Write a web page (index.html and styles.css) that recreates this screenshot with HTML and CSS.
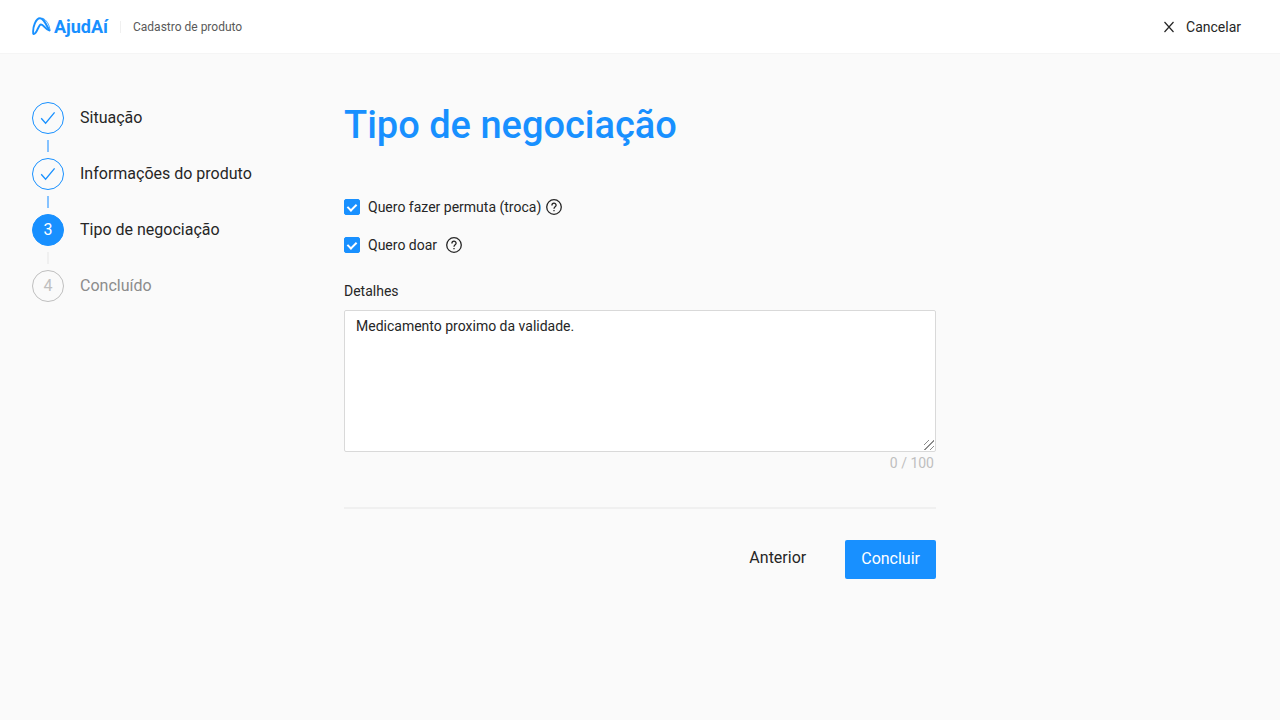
FILE: index.html
```html
<!DOCTYPE html>
<html lang="pt-BR">
<head>
<meta charset="utf-8">
<meta name="viewport" content="width=device-width, initial-scale=1">
<title>AjudAí - Cadastro de produto</title>
<link rel="stylesheet" href="styles.css">
</head>
<body>
<header class="header">
  <div class="brand">
    <svg class="brand-mark" viewBox="0 0 20 20" aria-hidden="true">
      <path d="M1.300 16.500C.4 10.500 3.800 1.200 8 1.200C11.500 1.200 13.500 6 16.800 12.500" stroke-width="1.900"/>
      <path d="M1.600 17C5 17.600 6.200 7.400 9 7.400C11.800 7.400 13.200 12.600 17.600 13.400" stroke-width="2"/>
      <path d="M11 1.400C14.200 2.800 17.200 7 18 12.800" stroke-width=".8"/>
    </svg>
    <span class="brand-name">AjudAí</span>
  </div>
  <span class="header-title">Cadastro de produto</span>
  <button class="cancel" type="button">
    <svg class="cancel-icon" viewBox="0 0 12 12" aria-hidden="true"><path d="M1.500 1L10.500 11M10.500 1L1.500 11"/></svg>
    Cancelar
  </button>
</header>
<main class="page">
  <ol class="steps">
    <li class="step step-done">
      <span class="step-icon"><svg class="step-check" viewBox="0 0 16 16" aria-hidden="true"><path d="M1.200 8.200L5.600 13.200L14.600 2.400"/></svg></span>
      <span class="step-label">Situação</span>
    </li>
    <li class="step step-done">
      <span class="step-icon"><svg class="step-check" viewBox="0 0 16 16" aria-hidden="true"><path d="M1.200 8.200L5.600 13.200L14.600 2.400"/></svg></span>
      <span class="step-label">Informações do produto</span>
    </li>
    <li class="step step-active" aria-current="step">
      <span class="step-icon">3</span>
      <span class="step-label">Tipo de negociação</span>
    </li>
    <li class="step step-wait">
      <span class="step-icon">4</span>
      <span class="step-label">Concluído</span>
    </li>
  </ol>
  <form class="form">
    <h1 class="title">Tipo de negociação</h1>
    <div class="options">
      <div class="option">
        <input class="checkbox" type="checkbox" id="permuta" checked>
        <label class="option-label" for="permuta">Quero fazer permuta (troca)</label>
        <svg class="help" viewBox="0 0 16 16" aria-hidden="true"><circle cx="8" cy="8" r="7.300"/><path d="M5.900 6.500C5.900 3.500 10.100 3.500 10.100 6.300C10.100 7.900 8 7.800 8 9.700"/><path d="M8 10.900V12.300"/></svg>
      </div>
      <div class="option">
        <input class="checkbox" type="checkbox" id="doar" checked>
        <label class="option-label option-label-wide" for="doar">Quero doar</label>
        <svg class="help" viewBox="0 0 16 16" aria-hidden="true"><circle cx="8" cy="8" r="7.300"/><path d="M5.900 6.500C5.900 3.500 10.100 3.500 10.100 6.300C10.100 7.900 8 7.800 8 9.700"/><path d="M8 10.900V12.300"/></svg>
      </div>
    </div>
    <label class="field-label" for="detalhes">Detalhes</label>
    <textarea class="textarea" id="detalhes" rows="6">Medicamento proximo da validade.</textarea>
    <div class="counter">0 / 100</div>
    <div class="actions">
      <button class="button button-text" type="button">Anterior</button>
      <button class="button button-primary" type="submit">Concluir</button>
    </div>
  </form>
</main>
</body>
</html>
```

FILE: styles.css
```css
* {
  box-sizing: border-box;
}

body {
  margin: 0;
  background: #fafafa;
  color: #262626;
  font: 14px/22px Roboto, sans-serif;
}

button {
  border: 0;
  background: none;
  color: inherit;
  font: inherit;
  cursor: pointer;
}

.header {
  display: flex;
  align-items: center;
  padding: 16px 32px 15px;
  background: #fff;
  border-bottom: 1px solid #f5f5f5;
}

.brand {
  display: flex;
  align-items: center;
  gap: 2px;
  padding-right: 12px;
  color: #1890ff;
}

.brand-mark {
  width: 20px;
  height: 20px;
  fill: none;
  stroke: currentColor;
  stroke-linecap: round;
}

.brand-name {
  font: bold 18px/22px Roboto, sans-serif;
}

.header-title {
  padding-left: 13px;
  background: linear-gradient(#f0f0f0, #f0f0f0) left center / 1px 12px no-repeat;
  color: #595959;
  font-size: 12px;
}

.cancel {
  display: flex;
  align-items: center;
  gap: 11px;
  margin-left: auto;
  padding: 0 7px;
}

.cancel-icon {
  width: 12px;
  height: 12px;
  fill: none;
  stroke: currentColor;
  stroke-width: 1.2;
}

.page {
  display: grid;
  grid-template-columns: 280px minmax(0, 592px);
  gap: 32px;
  padding: 48px 32px;
}

.steps {
  margin: 0;
  padding: 0;
  list-style: none;
  font-size: 16px;
}

.step {
  display: grid;
  grid-template-columns: 32px 1fr;
  column-gap: 16px;
  align-items: center;
}

.step-icon {
  display: flex;
  align-items: center;
  justify-content: center;
  height: 32px;
  border: 1px solid #1890ff;
  border-radius: 50%;
  color: #1890ff;
}

.step:not(:last-child)::after {
  content: "";
  justify-self: center;
  width: 2px;
  height: 12px;
  margin: 6px 0;
  background: #f0f0f0;
}

.step-done:not(:last-child)::after {
  background: #85c2ff;
}

.step-active .step-icon {
  background: #1890ff;
  color: #fff;
}

.step-wait .step-icon {
  border-color: #bfbfbf;
  color: #bfbfbf;
}

.step-wait .step-label {
  color: #8c8c8c;
}

.step-check {
  width: 16px;
  height: 16px;
  fill: none;
  stroke: currentColor;
  stroke-width: 1.3;
}

.title {
  margin: 0 0 48px;
  color: #1890ff;
  font-size: 38px;
  font-weight: 500;
  line-height: 46px;
}

.options {
  display: grid;
  gap: 16px;
  margin-bottom: 24px;
}

.option {
  display: flex;
  align-items: center;
}

.checkbox {
  display: flex;
  justify-content: center;
  width: 16px;
  height: 16px;
  margin: 0;
  border-radius: 2px;
  border: 1px solid #1890ff;
  background: #fff;
  appearance: none;
}

.checkbox:checked {
  background: #1890ff;
}

.checkbox:checked::after {
  content: "";
  box-sizing: border-box;
  width: 6px;
  height: 9px;
  margin-top: 2px;
  border: solid #fff;
  border-width: 0 2px 2px 0;
  transform: rotate(45deg);
}

.option-label {
  padding: 0 5px 0 8px;
}

.option-label-wide {
  padding-right: 9px;
}

.help {
  width: 16px;
  height: 16px;
  fill: none;
  stroke: currentColor;
  stroke-width: 1.3;
}

.field-label {
  display: block;
  margin-bottom: 8px;
}

.textarea {
  display: block;
  width: 100%;
  height: 142px;
  padding: 4px 11px;
  border: 1px solid #d9d9d9;
  border-radius: 2px;
  background: #fff;
  color: inherit;
  font: inherit;
  resize: vertical;
}

.textarea::-webkit-resizer {
  background: repeating-linear-gradient(135deg, transparent 0 3px, #8c8c8c 3px 4px) right 1px bottom 1px / 10px 10px no-repeat;
  clip-path: polygon(100% 30%, 100% 100%, 30% 100%);
}

.counter {
  padding-right: 2px;
  color: #bfbfbf;
  text-align: right;
}

.actions {
  display: flex;
  justify-content: flex-end;
  gap: 24px;
  margin-top: 33px;
  padding-top: 31px;
  border-top: 2px solid #f0f0f0;
}

.button {
  padding: 7px 16px 8px;
  border-radius: 2px;
  font-size: 16px;
  line-height: 24px;
}

.button-text {
  padding: 6px 15px 9px;
}

.button-primary {
  background: #1890ff;
  color: #fff;
}
```
